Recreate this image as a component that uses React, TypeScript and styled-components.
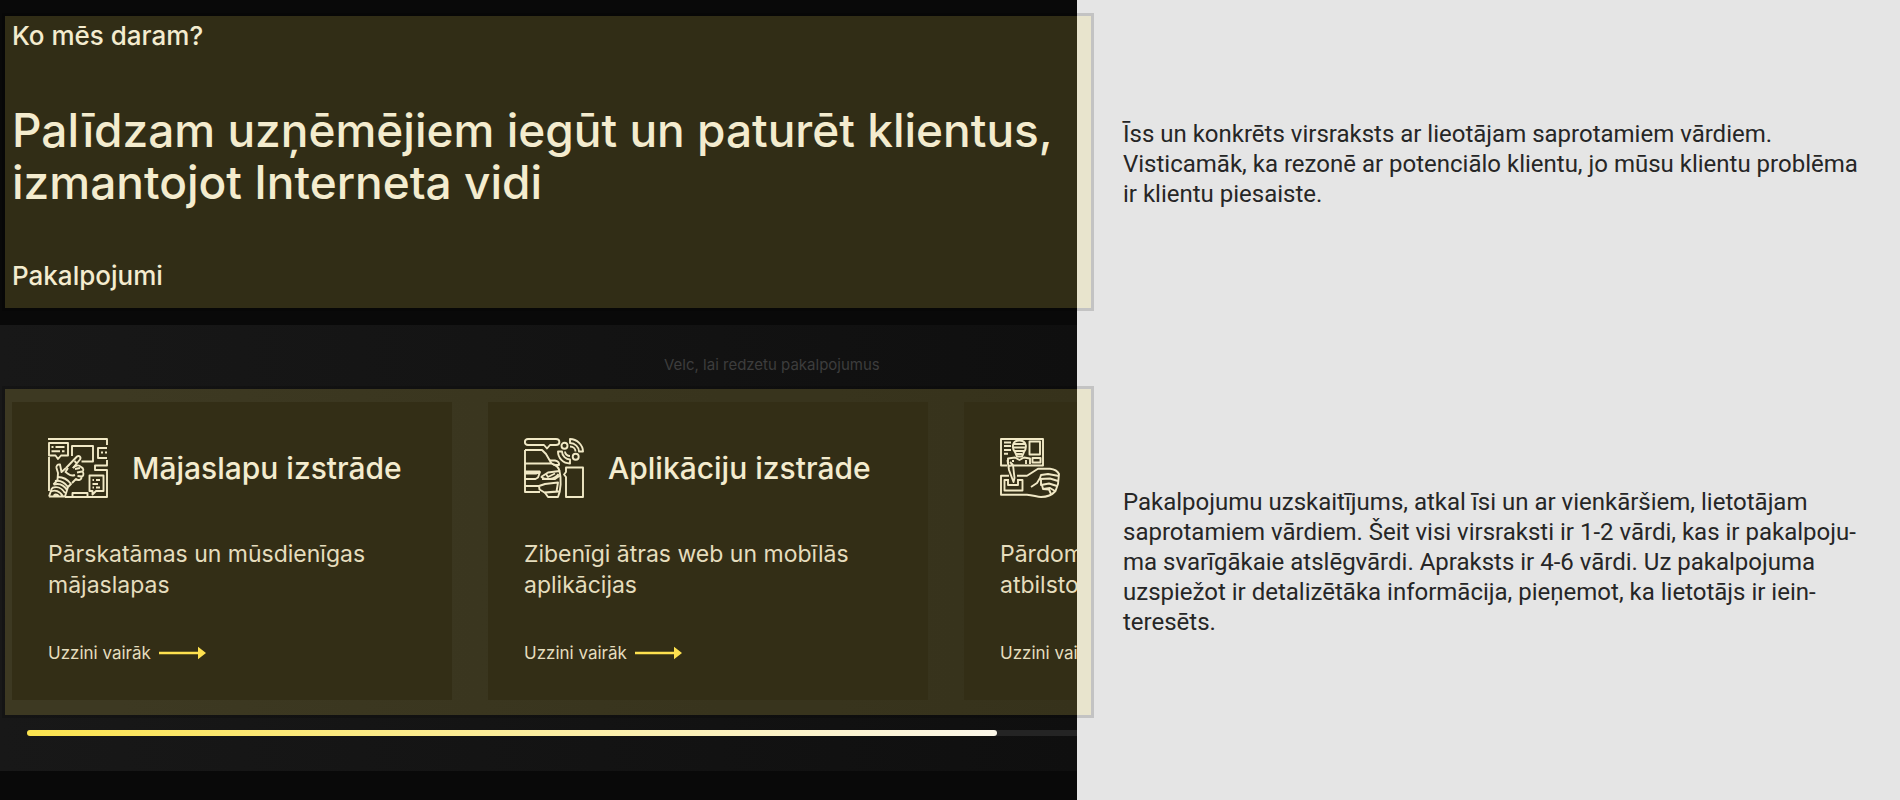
import React from "react";
import styled, { createGlobalStyle } from "styled-components";

const GlobalStyle = createGlobalStyle`
  * { box-sizing: border-box; }
  body { margin: 0; background: #e5e5e5; }
  h1, h2, h3, p { margin: 0; font-weight: inherit; }
`;

const Page = styled.div`
  display: grid;
  grid-template-columns: minmax(0, 1077fr) minmax(0, 823fr);
  min-height: 100vh;
  background: #e5e5e5;
  overflow: hidden;
`;

const Site = styled.main`
  display: flex;
  flex-direction: column;
  background: #090909;
  color: #f3efe6;
  font-family: Inter, sans-serif;
`;

const Marked = styled.div`
  position: relative;
`;

const Highlight = styled.div`
  position: absolute;
  inset: -3px -17px -3px 2px;
  border: 3px solid rgba(0, 0, 0, 0.15);
  background: rgba(251, 228, 86, 0.17);
  background-clip: padding-box;
  pointer-events: none;
`;

const Intro = styled.section`
  padding: 16px 0 17px;
`;

const IntroBody = styled.div`
  display: flex;
  flex-direction: column;
  gap: 52px;
  padding: 4px 0 16px 12px;
`;

const Label = styled.h2`
  font-size: 26px;
  line-height: 32px;
  font-weight: 500;
`;

const Headline = styled.h1`
  font-size: 46px;
  line-height: 52px;
  font-weight: 500;
  white-space: pre-line;
`;

const Services = styled.section`
  padding: 28px 0 35px;
  background: linear-gradient(90deg, #181818, #0f0f0f);
`;

const Hint = styled.p`
  padding: 0 0 12px 664px;
  font-size: 15px;
  line-height: 24px;
  color: #3d3d3d;
  white-space: nowrap;
`;

const Track = styled.div`
  display: flex;
  gap: 36px;
  padding: 13px 0 15px 12px;
  overflow: hidden;
`;

const Card = styled.article`
  flex: 0 0 440px;
  height: 298px;
  padding: 36px 0 0 36px;
  background: #0b0a09;
`;

const CardHead = styled.header`
  display: flex;
  align-items: center;
  gap: 24px;
  height: 60px;
`;

const CardTitle = styled.h3`
  font-size: 30px;
  line-height: 36px;
  font-weight: 500;
  white-space: nowrap;
`;

const CardText = styled.p`
  margin: 41px 0 40px;
  font-size: 23px;
  line-height: 31px;
  color: #e2ddd2;
  white-space: pre-line;
`;

const MoreLink = styled.a`
  display: inline-flex;
  align-items: center;
  gap: 8px;
  font-size: 17px;
  line-height: 24px;
  color: #e2ddd2;
  text-decoration: none;
  white-space: nowrap;
`;

const Icon = styled.svg`
  flex: none;
  width: 60px;
  height: 60px;
  fill: none;
  stroke: #f0ebdc;
  stroke-width: 1.9;
  stroke-linejoin: round;
`;

const Arrow = styled.svg`
  width: 48px;
  height: 14px;
`;

const ScrollRail = styled.div`
  height: 6px;
  margin: 15px 0 0 27px;
  background: #242424;
  border-radius: 3px 0 0 3px;
`;

const ScrollFill = styled.div`
  height: 100%;
  border-radius: 3px;
  background: linear-gradient(90deg, #fbe34f, #fbf6e8);
`;

const Notes = styled.aside`
  display: flex;
  flex-direction: column;
  gap: 278px;
  padding: 119px 0 0 46px;
`;

const Note = styled.p`
  font-family: Roboto, sans-serif;
  font-size: 24px;
  line-height: 30px;
  color: #262626;
  white-space: pre;
`;

const WebIcon = () => (
  <Icon viewBox="0 0 60 60" aria-hidden="true">
    <path d="M0 1H59V7M1 19V53M59 22V27.5H47V32H59V59H17" />
    <path d="M1 5H20V17.5H13L10 21L7.5 17.5H1Z" />
    <path d="M3.5 9H5.5M7.5 9H16.5M3.5 13.3H12M14 13.3H16.5" />
    <path d="M24 18V8H45V23.5H33.5M59 10H50V20H59M53 14.5H55M57 14.5H59" />
    <path d="M41.5 37.5H55.5V53H48L44.5 56.5V53H41.5ZM44.5 42H46M48 42H52M44.5 46H50M44.5 49.5H46M48 49.5H52" />
    <path d="M24.5 59V55H39.5V59" />
    <path d="M18 30L29 18.5C31 17 33.5 19 32 21.5L25 30M26.5 23L29 25.5" />
    <path d="M18 30L13.5 34L12 26.5C9.5 26 8 28 8.5 30L10 35L9.5 42L5.5 46.5" />
    <path d="M25 30C27 27 31 26.5 33 29C36 30 35.5 33 34.5 33.5C36.5 36 35 38.5 33.5 38.5C34 42 30 43 28 41L24 45" />
    <path d="M27 31L32 30M29 34.5L34 33.5M29.5 38L33.5 38.5M20 30L17.5 34C21 36 22 39 27 37" />
    <path d="M10 39C15 39 20 42 23 46L20 49C17 45 12 42 7 43M5.5 46.5C11 45 16 47 19 52M4 50C9 48 14 50 17 55M2 54C7 51 12 53 15 58.5M1 58.5L4 50M6 58.5C6 56 9 55.5 11 58.5M1 58.5H17L20 49" />
  </Icon>
);

const AppIcon = () => (
  <Icon viewBox="0 0 60 60" aria-hidden="true">
    <path d="M4 1H32C36.5 1 36.5 7 32 7H26L23 10.5L20 7H4C-0.2 7 -0.2 1 4 1Z" />
    <path d="M1 12H18L22 16L27.5 25.5M1 12V54H16M1 25.5H27.5C32 27 35 30 35.5 33" />
    <path d="M26 22.5H31C34 23 35.5 25 35 27H29.5" />
    <path d="M1 33.5H16M1 35.5H12L16 34L14 39.5L11.5 41H1M1 48H15" />
    <path d="M17 39L24 34.5L35.5 33C37.5 41 37 52 34 59H24L20.5 54" />
    <path d="M17 39C22 42 30 42 34.5 36M22 36L24 39L31 35.5M36 37.5L31 41H18" />
    <path d="M15 48L21 46L34 44.5L32.5 53.5L20.5 54.5L15.5 51.5ZM22 54.5L35 53.5" />
    <circle cx="40.5" cy="7.7" r="3" />
    <circle cx="51.7" cy="18.8" r="3" />
    <path d="M46 1C53 1 59 7 59 13.5H55C55 9 51 5 46 5ZM46 8.5C49 8.5 51.5 10.5 51.5 13.5" />
    <path d="M34 13.5C34 20 39 25.5 46 25.5V21.5C42 21.5 38 18 38 13.5ZM41 13.5C41 16 43.5 18 46 18" />
    <path d="M42 29.5H59V59H42V39L40 36.5L42 34Z" />
  </Icon>
);

const DesignIcon = () => (
  <Icon viewBox="0 0 60 60" aria-hidden="true">
    <path d="M7 27.5H1V1H43V27.5H14M4 4.5H11M4 8H11M4 12H11M4 15.7H8" />
    <path d="M19.3 2.5C27 2.5 27 10 24 14L22 18.5H17L15 14C11.5 10 12 2.5 19.3 2.5ZM14 6H25M13.5 9.5H25.5M15 13H24M16.5 16H22" />
    <path d="M8 26V20.5L15 19.5L19.5 22L24 19.5L30 20.5V26M12 23H14M26 22V26" />
    <path d="M29.5 3.5H40V16.5H29.5ZM32.5 20H40.5V24.5H32.5Z" />
    <path d="M7.5 22L9 32L13.5 44L14.5 40L13 27L10 24M9 28L13 27" />
    <path d="M9 37.7H1V56.7H27C33 57 37 59 41 59C48 59 52 57 55.5 53L58 46L59 36C57 32 53 31 50 30.7H38L27 37.7H17" />
    <path d="M9 42H4.5V52.5H22.5V42H17M8 42V47H18V42" />
    <path d="M31 49L37 45L40 40L41 37L48 36L59 38M40 41L50 40.5L58 43M41 41V47L49 45.5L57 48M42 47L43 51L50 50L55 53M43 51L49 51.5L51 56" />
  </Icon>
);

type Service = { title?: string; text: string; icon: React.ReactNode };

const services: Service[] = [
  { title: "Mājaslapu izstrāde", text: "Pārskatāmas un mūsdienīgas\nmājaslapas", icon: <WebIcon /> },
  { title: "Aplikāciju izstrāde", text: "Zibenīgi ātras web un mobīlās\naplikācijas", icon: <AppIcon /> },
  { text: "Pārdomāts\natbilstošs", icon: <DesignIcon /> },
];

const ServiceCard = ({ title, text, icon }: Service) => (
  <Card>
    <CardHead>
      {icon}
      {title && <CardTitle>{title}</CardTitle>}
    </CardHead>
    <CardText>{text}</CardText>
    <MoreLink href="#">
      Uzzini vairāk
      <Arrow viewBox="0 0 48 14" aria-hidden="true">
        <path d="M0 5.7H39V0.8L47 7L39 13.2V8.3H0Z" fill="#ffe14d" />
      </Arrow>
    </MoreLink>
  </Card>
);

export default function App() {
  return (
    <Page>
      <GlobalStyle />
      <Site>
        <Intro>
          <Marked>
            <IntroBody>
              <Label>Ko mēs daram?</Label>
              <Headline>{"Palīdzam uzņēmējiem iegūt un paturēt klientus,\nizmantojot Interneta vidi"}</Headline>
              <Label>Pakalpojumi</Label>
            </IntroBody>
            <Highlight />
          </Marked>
        </Intro>
        <Services>
          <Hint>Velc, lai redzetu pakalpojumus</Hint>
          <Marked>
            <Track>
              {services.map((s) => (
                <ServiceCard key={s.text} {...s} />
              ))}
            </Track>
            <Highlight />
          </Marked>
          <ScrollRail>
            <ScrollFill style={{ width: `${(970 / 1050) * 100}%` }} />
          </ScrollRail>
        </Services>
      </Site>
      <Notes>
        <Note>{"Īss un konkrēts virsraksts ar lieotājam saprotamiem vārdiem.\nVisticamāk, ka rezonē ar potenciālo klientu, jo mūsu klientu problēma\nir klientu piesaiste."}</Note>
        <Note>{"Pakalpojumu uzskaitījums, atkal īsi un ar vienkāršiem, lietotājam\nsaprotamiem vārdiem. Šeit visi virsraksti ir 1-2 vārdi, kas ir pakalpoju-\nma svarīgākaie atslēgvārdi. Apraksts ir 4-6 vārdi. Uz pakalpojuma\nuzspiežot ir detalizētāka informācija, pieņemot, ka lietotājs ir iein-\nteresēts."}</Note>
      </Notes>
    </Page>
  );
}
